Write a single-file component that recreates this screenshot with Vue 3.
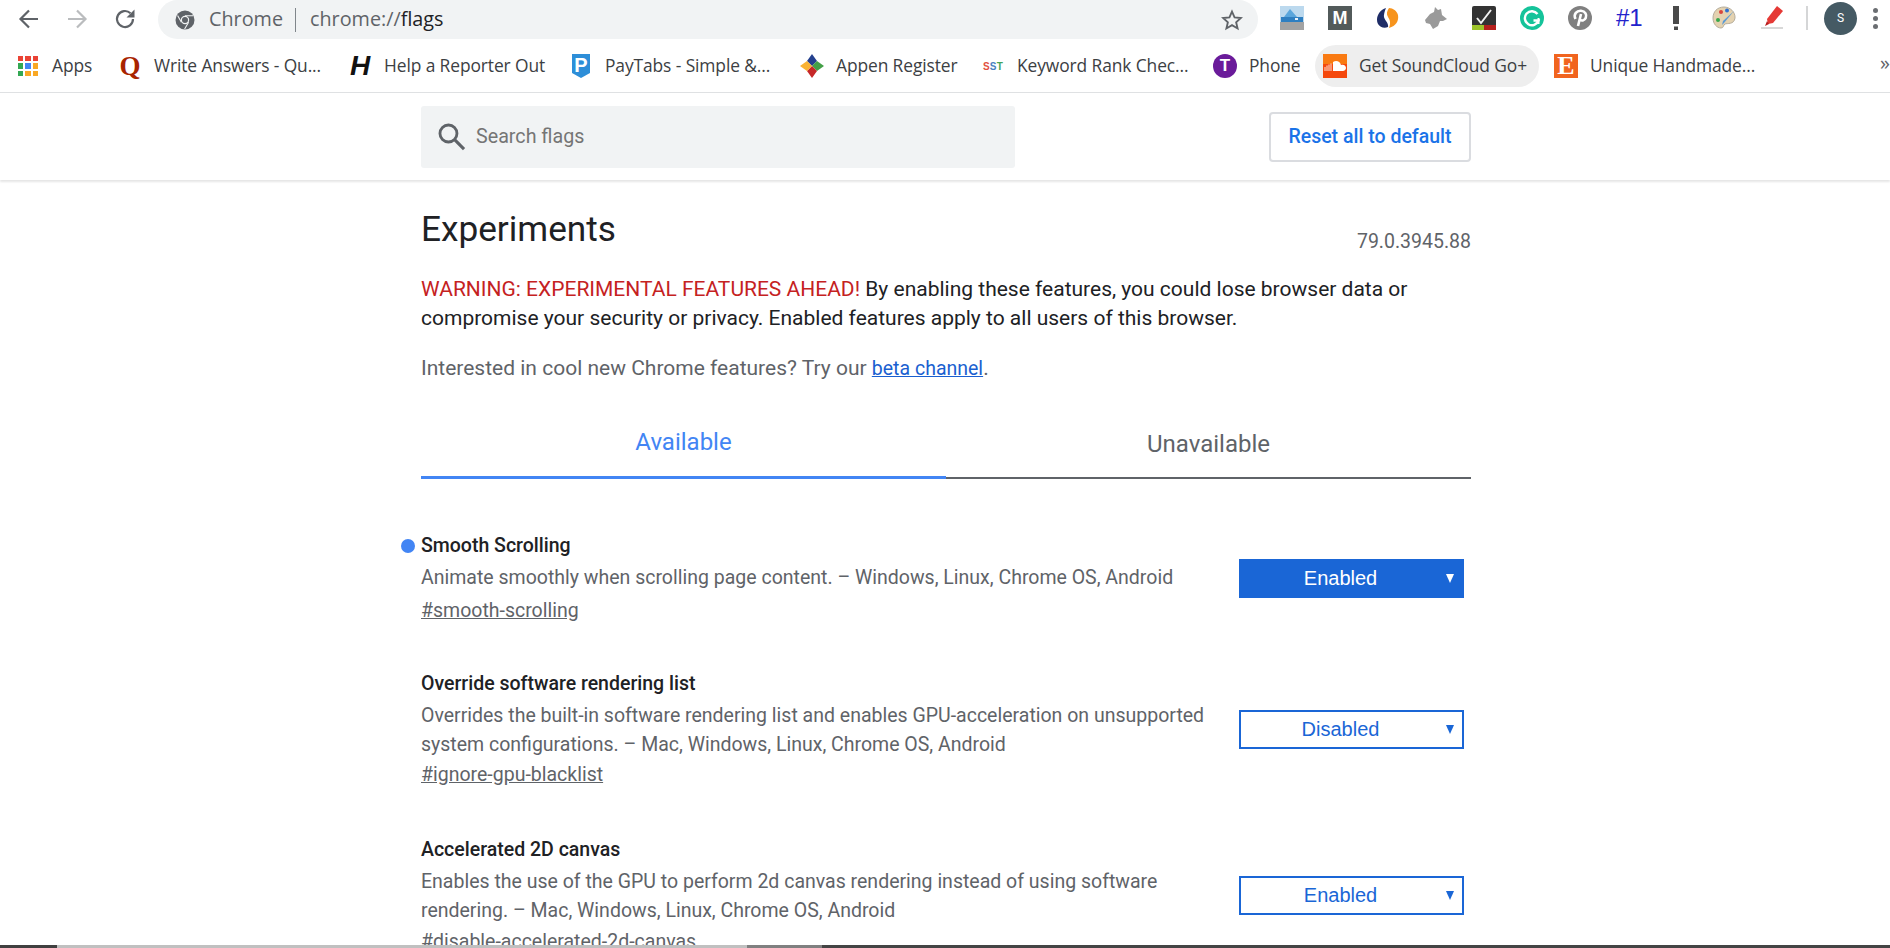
<template>
  <div class="page">
    <div class="toolbar">
      <div class="nav-btn">
        <svg width="24" height="24" viewBox="0 0 24 24"><path d="M21 12H4M12 3.5 3.5 12l8.5 8.5" fill="none" stroke="#5f6368" stroke-width="2.2"/></svg>
      </div>
      <div class="nav-btn">
        <svg width="24" height="24" viewBox="0 0 24 24"><path d="M3 12h17M12 3.5l8.5 8.5-8.5 8.5" fill="none" stroke="#babcbe" stroke-width="2.2"/></svg>
      </div>
      <div class="nav-btn">
        <svg width="24" height="24" viewBox="0 0 24 24"><path d="M20 12a8 8 0 1 1-2.5-5.8" fill="none" stroke="#5f6368" stroke-width="2.2"/><path d="M21.5 2.5v8h-8z" fill="#5f6368"/></svg>
      </div>
      <div class="omnibox">
        <svg class="chrome-icon" width="20" height="20" viewBox="0 0 20 20">
          <circle cx="10" cy="10" r="9.5" fill="#5f6368"/>
          <circle cx="10" cy="10" r="3.6" fill="#5f6368" stroke="#f1f3f4" stroke-width="1.2"/>
          <path d="M10 5.8h8M6.4 12.2 2.6 5.4M13.6 12.2 9.6 19" stroke="#f1f3f4" stroke-width="1.1"/>
        </svg>
        <span class="origin">Chrome</span>
        <span class="omni-sep"></span>
        <span class="url">chrome://<b>flags</b></span>
        <svg class="star" width="22" height="22" viewBox="0 0 24 24"><path d="M12 2.8l2.8 6.4 6.9.6-5.2 4.6 1.6 6.8-6.1-3.6-6.1 3.6 1.6-6.8-5.2-4.6 6.9-.6z" fill="none" stroke="#5f6368" stroke-width="2"/></svg>
      </div>
      <div class="extensions">
        <svg class="ext" viewBox="0 0 24 24">
          <rect width="24" height="24" fill="#bcd9ee"/>
          <rect y="16" width="24" height="8" fill="#a3a3a3"/>
          <path d="M4 11 10 3l7 8z" fill="#5aa6dc"/>
          <rect x="1" y="11" width="22" height="5" fill="#2f7fc1"/>
          <rect x="15" y="12" width="3" height="2" fill="#e8f2f8"/>
        </svg>
        <svg class="ext" viewBox="0 0 24 24">
          <rect width="24" height="24" fill="#525a5a"/>
          <text x="12" y="18" text-anchor="middle" class="ext-m">M</text>
        </svg>
        <svg class="ext" viewBox="0 0 24 24">
          <path d="M10 2C3 4-1 12 2 18c2 3 6 5 10 3 1-5-5-7-4-12 .3-2 1-5 2-7z" fill="#1f2d67"/>
          <path d="M13 2c-2 3-3 6-1 9 2 3 3 6 1 11 7-2 10-7 9-13-1-4-5-7-9-7z" fill="#f7941d"/>
        </svg>
        <svg class="ext" viewBox="0 0 24 24">
          <path d="M1 14 6 8l4-2 1-5 3 3 3-1 1 6 5 4-4 2h-3l-2 5-5 3-3-5-4-1z" fill="#9a9a9a"/>
        </svg>
        <svg class="ext" viewBox="0 0 24 24">
          <rect width="24" height="24" rx="2" fill="#333"/>
          <rect y="19" width="12" height="5" fill="#9ec42a"/>
          <rect x="12" y="19" width="12" height="5" fill="#b5201c"/>
          <path d="M5 12l4 5L19 4" fill="none" stroke="#f2f2f2" stroke-width="2"/>
        </svg>
        <svg class="ext" viewBox="0 0 24 24">
          <circle cx="12" cy="12" r="12" fill="#15c39a"/>
          <path d="M17.5 8A7 7 0 1 0 18.5 14.5h-5" fill="none" stroke="#fff" stroke-width="2.4"/>
          <path d="M18.5 12v6" stroke="#fff" stroke-width="2"/>
        </svg>
        <svg class="ext" viewBox="0 0 24 24">
          <circle cx="12" cy="12" r="12" fill="#808080"/>
          <path d="M10 20l3-12M7.5 13C5 8 9 4.5 13 4.8c4.500.3 6 4 4.800 7-1 2.800-4.800 3.700-6 1.400" fill="none" stroke="#fff" stroke-width="2.600"/>
        </svg>
        <span class="ext ext-num">#1</span>
        <svg class="ext" viewBox="0 0 24 24">
          <rect x="9" y="0" width="6" height="18" fill="#4a4a4a"/>
          <rect x="10" y="20.500" width="4" height="3.500" fill="#4a4a4a"/>
        </svg>
        <svg class="ext" viewBox="0 0 24 24">
          <path d="M12 1C5 1 1 6 1 12s4 10 8 10c3 0 2-3 4-4s9 1 10-6C23.500 6 18 1 12 1z" fill="#e4d2b0" stroke="#b5ad9c"/>
          <circle cx="9" cy="6" r="2" fill="#d9453c"/>
          <circle cx="15" cy="4.500" r="2" fill="#2f6fd0"/>
          <circle cx="6" cy="14" r="2" fill="#38a84a"/>
          <path d="M22 5 12 17l-2 2 1-4z" fill="#5b9bd5"/>
        </svg>
        <svg class="ext" viewBox="0 0 24 24">
          <path d="M17 0l6 5-10 12-5 1-1-5z" fill="#e53935"/>
          <path d="M7 15l2 3-4 2z" fill="#b71c1c"/>
          <rect x="1" y="21" width="22" height="2" fill="#d8d8d8"/>
        </svg>
        <span class="ext-sep"></span>
        <span class="avatar">S</span>
        <span class="kebab"><i></i><i></i><i></i></span>
      </div>
    </div>

    <div class="bookmarks">
      <div v-for="b in bookmarks" :key="b.label" class="bookmark" :class="{ hovered: b.icon === 'soundcloud' }" :style="{ width: b.w + 'px' }">
        <span class="bm-icon">
          <span v-if="b.icon === 'apps'" class="apps-grid"><i v-for="(c, i) in appColors" :key="i" :style="{ background: c }"></i></span>
          <span v-else-if="b.icon === 'quora'" class="bm-q">Q</span>
          <span v-else-if="b.icon === 'haro'" class="bm-h">H</span>
          <svg v-else-if="b.icon === 'paytabs'" width="24" height="24" viewBox="0 0 24 24">
            <path d="M3 0h18v19l-9 5-9-5z" fill="#2d8ed8"/>
            <text x="12" y="18" text-anchor="middle" class="bm-p">P</text>
          </svg>
          <svg v-else-if="b.icon === 'appen'" width="24" height="24" viewBox="0 0 24 24">
            <path d="M12 0l5 7-5 5-5-5z" fill="#24408e"/>
            <path d="M17 7l7 5-7 5-5-5z" fill="#43a047"/>
            <path d="M12 12l5 5-5 7-5-7z" fill="#c62828"/>
            <path d="M7 7l5 5-5 5-7-5z" fill="#f9b233"/>
          </svg>
          <span v-else-if="b.icon === 'sst'" class="bm-sst"><em>S</em><u>S</u><s>T</s></span>
          <span v-else-if="b.icon === 'phone'" class="bm-t">T</span>
          <svg v-else-if="b.icon === 'soundcloud'" width="24" height="24" viewBox="0 0 24 24">
            <rect width="24" height="24" fill="#f5480c"/>
            <rect width="24" height="10" fill="#f97a12"/>
            <path d="M10 8c3-2 7-1 8 3 3-1 5 1 5 3s-2 3-3 3H10z" fill="#fff"/>
            <path d="M2 13v4M4 11.500V17M6 10.500V17M8 9.500V17" stroke="#fff" stroke-width="1" opacity=".85"/>
          </svg>
          <span v-else-if="b.icon === 'etsy'" class="bm-e">E</span>
        </span>
        <span class="bm-label">{{ b.label }}</span>
      </div>
      <span class="bm-more">»</span>
    </div>

    <div class="search-bar">
      <div class="search-inner">
        <div class="search-box">
          <svg width="34" height="34" viewBox="0 0 24 24"><circle cx="9.500" cy="9.500" r="6" fill="none" stroke="#5f6368" stroke-width="2"/><path d="M14 14l6.500 6.500" stroke="#5f6368" stroke-width="2.200"/></svg>
          <span>Search flags</span>
        </div>
        <button class="reset-btn">Reset all to default</button>
      </div>
    </div>

    <div class="content">
      <div class="title-row">
        <h1>Experiments</h1>
        <span class="version">79.0.3945.88</span>
      </div>
      <p class="warning"><span class="red">WARNING: EXPERIMENTAL FEATURES AHEAD!</span> By enabling these features, you could lose browser data or compromise your security or privacy. Enabled features apply to all users of this browser.</p>
      <p class="channel">Interested in cool new Chrome features? Try our <a>beta channel</a>.</p>

      <div class="tabs">
        <div class="tab active">Available</div>
        <div class="tab">Unavailable</div>
      </div>

      <div v-for="f in flags" :key="f.link" class="flag" :style="{ marginTop: f.top + 'px' }">
        <span v-if="f.modified" class="dot"></span>
        <div class="flag-text">
          <div class="flag-name">{{ f.name }}</div>
          <div class="flag-desc">{{ f.desc }}</div>
          <a class="flag-link" :style="{ marginTop: f.gap + 'px' }">{{ f.link }}</a>
        </div>
        <div class="select" :class="{ filled: f.modified }">
          <span>{{ f.value }}</span>
          <i class="caret"></i>
        </div>
      </div>
    </div>

    <div class="bottom-strip">
      <i class="seg-a"></i><i class="seg-b"></i><i class="seg-c"></i><i class="seg-d"></i>
    </div>
  </div>
</template>

<script setup>
const bookmarks = [
  { icon: 'apps', label: 'Apps', w: 102 },
  { icon: 'quora', label: 'Write Answers - Qu...', w: 230 },
  { icon: 'haro', label: 'Help a Reporter Out', w: 221 },
  { icon: 'paytabs', label: 'PayTabs - Simple &...', w: 231 },
  { icon: 'appen', label: 'Appen Register', w: 181 },
  { icon: 'sst', label: 'Keyword Rank Chec...', w: 232 },
  { icon: 'phone', label: 'Phone', w: 110 },
  { icon: 'soundcloud', label: 'Get SoundCloud Go+', w: 231 },
  { icon: 'etsy', label: 'Unique Handmade...', w: 200 }
]

const appColors = ['#ea4335', '#ea4335', '#ea4335', '#34a853', '#4285f4', '#f9a825', '#34a853', '#f9a825', '#f9a825']

const flags = [
  {
    name: 'Smooth Scrolling',
    desc: 'Animate smoothly when scrolling page content. – Windows, Linux, Chrome OS, Android',
    link: '#smooth-scrolling',
    value: 'Enabled',
    modified: true,
    top: 53,
    gap: 4
  },
  {
    name: 'Override software rendering list',
    desc: 'Overrides the built-in software rendering list and enables GPU-acceleration on unsupported system configurations. – Mac, Windows, Linux, Chrome OS, Android',
    link: '#ignore-gpu-blacklist',
    value: 'Disabled',
    top: 45,
    gap: 1
  },
  {
    name: 'Accelerated 2D canvas',
    desc: 'Enables the use of the GPU to perform 2d canvas rendering instead of using software rendering. – Mac, Windows, Linux, Chrome OS, Android',
    link: '#disable-accelerated-2d-canvas',
    value: 'Enabled',
    top: 47,
    gap: 2
  }
]
</script>

<style>
html, body { margin: 0; background: #fff; overflow: hidden; }
</style>

<style scoped>
.page {
  height: 948px;
  display: flex;
  flex-direction: column;
  overflow: hidden;
  background: #fff;
  font-family: Roboto, "Liberation Sans", sans-serif;
  color: #202124;
}

/* browser chrome */
.toolbar {
  height: 39px;
  display: flex;
  align-items: flex-start;
  flex-shrink: 0;
  padding-left: 5px;
  font-family: "Open Sans", "Noto Sans", sans-serif;
}
.nav-btn {
  width: 48px;
  height: 38px;
  display: flex;
  align-items: center;
  justify-content: center;
}
.omnibox {
  width: 1100px;
  height: 39px;
  margin-left: 9px;
  display: flex;
  align-items: center;
  background: #f1f3f4;
  border-radius: 0 0 20px 20px / 0 0 20px 20px;
  border-top-left-radius: 20px;
  border-top-right-radius: 20px;
  font-size: 19.800px;
  color: #5f6368;
  box-sizing: border-box;
  padding-left: 17px;
}
.origin { margin: 0 0 3px 14px; }
.omni-sep {
  width: 1px;
  height: 24px;
  background: #80868b;
  margin: 0 14px 0 12px;
}
.url { margin-bottom: 3px; }
.url b { font-weight: 400; color: #202124; }
.star { margin-left: auto; margin-right: 15px; }
.extensions {
  display: flex;
  align-items: center;
  height: 36px;
  margin-left: 22px;
}
.ext {
  width: 24px;
  height: 24px;
  margin-right: 24px;
  flex-shrink: 0;
}
.ext-m { font: 700 18px "Liberation Sans", sans-serif; fill: #fff; }
.ext-num {
  color: #2222cc;
  font: 24px/24px "Liberation Sans", sans-serif;
  text-align: center;
  width: 24px;
}
.ext-sep {
  width: 2px;
  height: 24px;
  background: #d5d6d7;
  margin-left: -2px;
}
.avatar {
  width: 33px;
  height: 33px;
  margin-left: 16px;
  border-radius: 50%;
  background: #455a64;
  color: #fff;
  font: 12px/33px Roboto, sans-serif;
  text-align: center;
}
.kebab {
  display: flex;
  flex-direction: column;
  gap: 3px;
  margin-left: 16px;
}
.kebab i {
  width: 5px;
  height: 5px;
  border-radius: 50%;
  background: #6b6e72;
}

.bookmarks {
  height: 54px;
  flex-shrink: 0;
  display: flex;
  align-items: flex-start;
  padding: 6px 0 0 16px;
  box-sizing: border-box;
  border-bottom: 1px solid #dfe1e3;
  position: relative;
  font-family: "Open Sans", "Noto Sans", sans-serif;
  font-size: 17.400px;
  color: #3c4043;
}
.bookmark {
  height: 42px;
  display: flex;
  align-items: center;
  gap: 12px;
  flex-shrink: 0;
  white-space: nowrap;
  position: relative;
}
.bookmark.hovered::before {
  content: "";
  position: absolute;
  left: -8px;
  top: 0;
  width: 224px;
  height: 42px;
  border-radius: 21px;
  background: #eeeeee;
}
.bm-icon, .bm-label { position: relative; }
.bm-icon {
  width: 24px;
  height: 24px;
  display: flex;
  align-items: center;
  justify-content: center;
  flex-shrink: 0;
}
.bm-label { letter-spacing: -0.1px; margin-bottom: 3px; }
.apps-grid {
  display: grid;
  grid-template-columns: repeat(3, 5.500px);
  grid-auto-rows: 5.500px;
  gap: 2px;
}
.bm-q {
  font: 700 27px/24px "Liberation Serif", serif;
  color: #a82400;
}
.bm-h {
  font: italic 700 28px/24px "Liberation Sans", sans-serif;
  color: #111;
}
.bm-p { font: 700 20px "Liberation Sans", sans-serif; fill: #fff; }
.bm-sst { font: 700 10px "Liberation Sans", sans-serif; letter-spacing: 0.2px; }
.bm-sst em { font-style: normal; color: #e25141; }
.bm-sst u { text-decoration: none; color: #4a7fc1; }
.bm-sst s { text-decoration: none; color: #46a35a; }
.bm-t {
  width: 24px;
  height: 24px;
  border-radius: 50%;
  background: #6a1b9a;
  color: #fff;
  font: 700 17px/24px "Liberation Sans", sans-serif;
  text-align: center;
}
.bm-e {
  width: 24px;
  height: 24px;
  background: #f1641e;
  color: #fff;
  font: 700 26px/24px "Liberation Serif", serif;
  text-align: center;
}
.bm-more {
  position: absolute;
  left: 1880px;
  top: 10px;
  font-size: 20px;
  color: #5f6368;
}

/* flags header */
.search-bar {
  height: 87px;
  flex-shrink: 0;
  box-shadow: 0 2px 2px rgba(0, 0, 0, 0.1);
}
.search-inner {
  width: 1050px;
  margin-left: 421px;
  height: 100%;
  display: flex;
  align-items: center;
  justify-content: space-between;
  padding-bottom: 0;
}
.search-box {
  width: 594px;
  height: 62px;
  box-sizing: border-box;
  padding-left: 14px;
  display: flex;
  align-items: center;
  gap: 7px;
  background: #f1f3f4;
  border-radius: 3px;
  color: #757575;
  font-size: 19.700px;
}
.reset-btn {
  width: 202px;
  height: 50px;
  background: #fff;
  border: 2px solid #dadce0;
  border-radius: 4px;
  color: #1a73e8;
  font: 500 19.500px Roboto, sans-serif;
  padding: 0;
}

.content {
  width: 1050px;
  margin-left: 421px;
  flex: 1;
  min-height: 0;
  font-size: 19.500px;
}
.title-row {
  display: flex;
  justify-content: space-between;
  padding-top: 29px;
}
h1 {
  margin: 0;
  font-size: 35.200px;
  line-height: 40px;
  font-weight: 400;
}
.version {
  color: #5f6368;
  line-height: 24px;
  margin-top: 21px;
}
.warning {
  margin: 21px 0 0;
  line-height: 29px;
  font-size: 21px;
  color: #202124;
}
.red { color: #c5221f; }
.channel {
  margin: 21px 0 0;
  line-height: 29px;
  font-size: 21px;
  color: #5f6368;
}
.channel a { color: #1a5fd0; text-decoration: underline; font-size: 19.500px; }

.tabs {
  display: flex;
  margin-top: 40px;
}
.tab {
  flex: 1;
  height: 56px;
  box-sizing: border-box;
  border-bottom: 2px solid #5f6368;
  text-align: center;
  font-size: 24px;
  line-height: 43px;
  color: #5f6368;
}
.tab.active {
  color: #4285f4;
  border-bottom: 3px solid #4285f4;
  line-height: 39px;
}

.flag {
  display: flex;
  align-items: center;
  justify-content: space-between;
  position: relative;
  padding-right: 7px;
}
.dot {
  position: absolute;
  left: -20px;
  top: 7px;
  width: 14px;
  height: 14px;
  border-radius: 50%;
  background: #4285f4;
}
.flag-text { width: 790px; }
.flag-name {
  font-weight: 500;
  line-height: 28px;
}
.flag-desc {
  margin-top: 3px;
  line-height: 29px;
  color: #5f6368;
}
.flag-link {
  display: block;
  line-height: 29px;
  color: #5f6368;
  text-decoration: underline;
}
.select {
  width: 225px;
  height: 39px;
  margin-bottom: 1px;
  box-sizing: border-box;
  border: 2px solid #1a66d6;
  display: flex;
  align-items: center;
  justify-content: center;
  padding-right: 22px;
  position: relative;
  color: #1a66d6;
  font: 20px "Liberation Sans", sans-serif;
}
.select.filled {
  background: #1a66d6;
  color: #fff;
}
.caret {
  position: absolute;
  right: 8px;
  top: 13px;
  border-left: 4px solid transparent;
  border-right: 4px solid transparent;
  border-top: 9px solid currentColor;
}

.bottom-strip {
  height: 3px;
  flex-shrink: 0;
  display: flex;
  position: relative;
  z-index: 1;
}
.seg-a { width: 57px; background: #404040; }
.seg-b { width: 690px; background: #c0c0c0; }
.seg-c { width: 75px; background: #808080; }
.seg-d { flex: 1; background: #444; }
</style>
